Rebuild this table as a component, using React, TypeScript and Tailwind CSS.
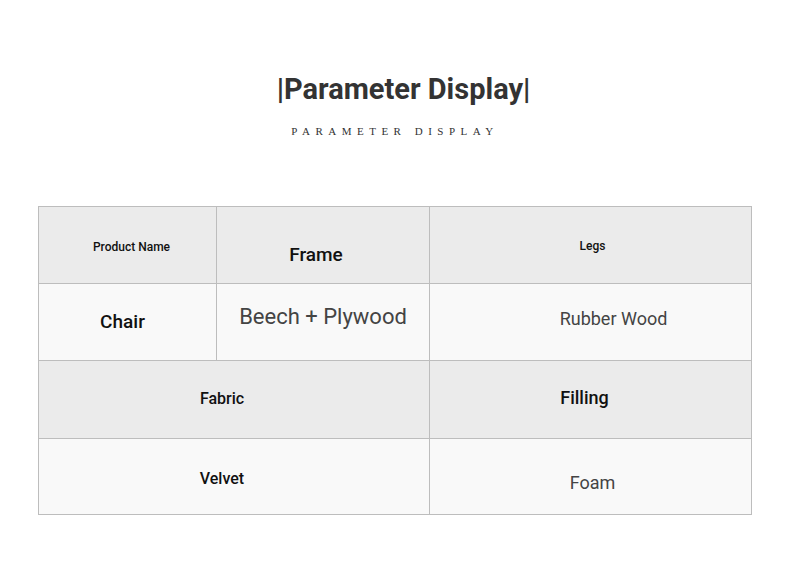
const font = { fontFamily: "Roboto, 'Liberation Sans', sans-serif" };

function Cell({
    children,
    className = "",
}: {
    children: React.ReactNode;
    className?: string;
}) {
    return <div className={`flex items-center justify-center ${className}`}>{children}</div>;
}

export default function App() {
    return (
        <div className="min-h-[564px] w-[790px] bg-white font-['Roboto','Liberation_Sans',sans-serif]">
            <div className="flex flex-col items-center pt-[70px]">
                <h1 className="ml-[17px] text-[29px] font-bold leading-[38px] text-[#333]">|Parameter Display|</h1>
                <p className="mt-[15px] ml-[0px] font-['Liberation_Serif',serif] text-[11px] font-medium tracking-[0.5em] text-[#333]">
                    PARAMETER DISPLAY
                </p>
            </div>

            <div className="mx-[38px] mt-[66px] w-[714px] border border-[#bdbdbd]">
                <div className="grid h-[77px] grid-cols-[178px_213px_1fr] border-b border-[#bdbdbd] bg-[#ebebeb]">
                    <Cell className="border-r border-[#bdbdbd] pl-[8px] pt-[4px]">
                        <span className="text-[12px] font-medium text-[#111]">Product Name</span>
                    </Cell>
                    <Cell className="border-r border-[#bdbdbd] pr-[14px] pt-[22px]">
                        <span className="text-[19px] font-medium text-[#111]">Frame</span>
                    </Cell>
                    <Cell className="pl-[4px] pt-[2px]">
                        <span className="text-[12px] font-medium text-[#111]">Legs</span>
                    </Cell>
                </div>
                <div className="grid h-[77px] grid-cols-[178px_213px_1fr] border-b border-[#bdbdbd] bg-[#f9f9f9]">
                    <Cell className="border-r border-[#bdbdbd] pr-[10px] pt-[2px]">
                        <span className="text-[19px] font-medium text-[#111]">Chair</span>
                    </Cell>
                    <Cell className="border-r border-[#bdbdbd] pb-[11px]">
                        <span className="text-[22px] text-[#444]">Beech + Plywood</span>
                    </Cell>
                    <Cell className="pl-[46px] pb-[6px]">
                        <span className="text-[18px] text-[#444]">Rubber Wood</span>
                    </Cell>
                </div>
                <div className="grid h-[78px] grid-cols-[391px_1fr] border-b border-[#bdbdbd] bg-[#ebebeb]">
                    <Cell className="border-r border-[#bdbdbd] pr-[24px]">
                        <span className="text-[16px] font-medium text-[#111]">Fabric</span>
                    </Cell>
                    <Cell className="pr-[12px] pb-[4px]">
                        <span className="text-[18px] font-medium text-[#111]">Filling</span>
                    </Cell>
                </div>
                <div className="grid h-[75px] grid-cols-[391px_1fr] bg-[#f9f9f9]">
                    <Cell className="border-r border-[#bdbdbd] pr-[24px] pt-[5px]">
                        <span className="text-[16px] font-medium text-[#111]">Velvet</span>
                    </Cell>
                    <Cell className="pl-[4px] pt-[12px]">
                        <span className="text-[18px] text-[#444]" style={font}>Foam</span>
                    </Cell>
                </div>
            </div>
        </div>
    );
}
